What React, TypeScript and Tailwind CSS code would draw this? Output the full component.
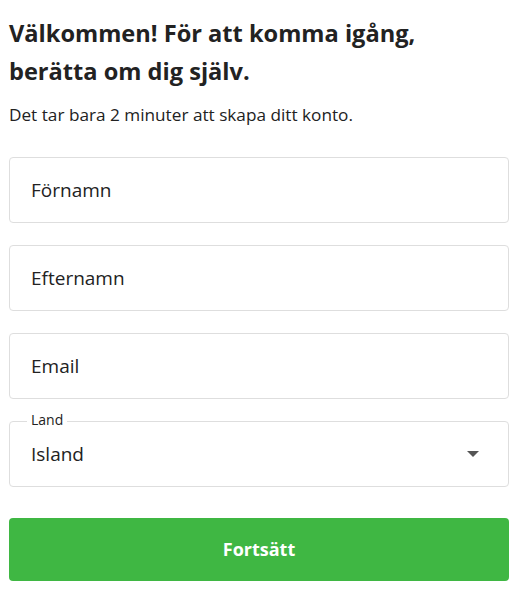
import React from "react";

function Field({ placeholder }: { placeholder: string }) {
  return (
    <div className="flex h-[66px] w-full items-center rounded-[4px] border border-[#dedede] bg-white px-[21px] text-[19px] text-[#222]">
      {placeholder}
    </div>
  );
}

export default function App() {
  return (
    <div
      className="min-h-[608px] w-[520px] bg-white pl-[9px] pr-[11px] pt-[14px] text-[#222]"
      style={{ fontFamily: '"Open Sans", "Noto Sans", sans-serif' }}
    >
      <h1 className="text-[23.6px] font-bold leading-[38px] text-[#222]">
        Välkommen! För att komma igång,
        <br />
        berätta om dig själv.
      </h1>
      <p className="mt-[14px] text-[17.2px] leading-[22px] text-[#222]">
        Det tar bara 2 minuter att skapa ditt konto.
      </p>
      <div className="mt-[31px] flex flex-col gap-[22px]">
        <Field placeholder="Förnamn" />
        <Field placeholder="Efternamn" />
        <Field placeholder="Email" />
        <div className="relative flex h-[66px] w-full items-center justify-between rounded-[4px] border border-[#dedede] bg-white pl-[21px] pr-[29px] text-[19px] text-[#222]">
          <span className="absolute left-[17px] top-[-12px] bg-white px-[4px] text-[14px] leading-[20px] text-[#222]">
            Land
          </span>
          <span>Island</span>
          <svg width="12" height="6" viewBox="0 0 12 6">
            <path d="M0 0 L12 0 L6 6 Z" fill="#555" />
          </svg>
        </div>
      </div>
      <button className="mt-[31px] flex h-[63px] w-full items-center justify-center rounded-[4px] bg-[#3fb743] text-[18px] font-bold text-white">
        Fortsätt
      </button>
    </div>
  );
}
